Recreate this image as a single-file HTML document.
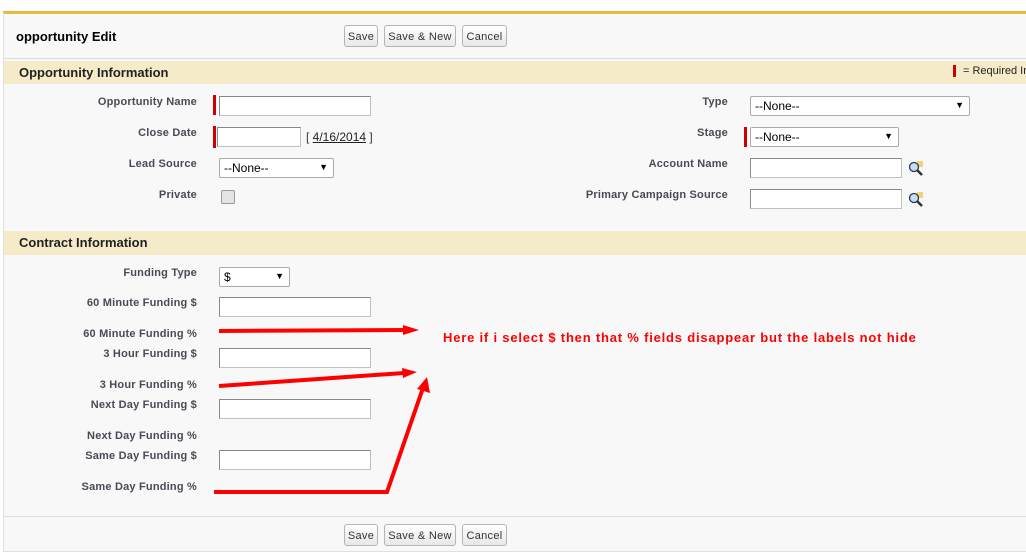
<!DOCTYPE html>
<html><head><style>
body{margin:0;width:1026px;height:555px;background:#fff;font-family:"Liberation Sans",Arial,sans-serif;position:relative;overflow:hidden}
.a{position:absolute}
.panel{left:3px;top:11px;width:1030px;height:541px;background:#f8f8f8;border-top:3px solid #e3bc3a;border-left:1px solid #e0e0e0;border-bottom:1px solid #e0e0e0;box-sizing:border-box}
.lbl{font-size:11px;font-weight:bold;color:#4a4a56;text-align:right;width:190px;white-space:nowrap;letter-spacing:0.2px}
.rl{width:220px}
.inp{background:#fff;border:1px solid #c0c0c0;border-top-color:#888;border-left-color:#888;height:19px;box-sizing:border-box}
.sel{background:#fff;border:1px solid #aaa;border-radius:2px;height:20px;box-sizing:border-box;font-size:12px;color:#000;padding:2px 0 0 4px}
.sel:after{content:"▼";position:absolute;right:5px;top:3px;font-size:9px}
.req{width:3px;background:#c00;height:20px}
.btn{top:0;height:22px;border:1px solid #b5b5b5;border-radius:3px;background:linear-gradient(#fff,#e8e8e8);font-size:11px;color:#333;box-sizing:border-box;text-align:center;line-height:22px;letter-spacing:0.3px}
.sec{left:4px;width:1022px;height:23px;background:#f6ebc8;font-size:13px;font-weight:bold;color:#222;padding-left:15px;line-height:23px;box-sizing:border-box}
.mag{width:16px;height:16px}
</style></head><body>
<div class="a panel"></div>
<div class="a" style="left:16px;top:29px;font-size:13px;font-weight:bold;color:#000">opportunity Edit</div>
<div class="a" style="left:0;top:25px;width:1026px;height:22px">
<div class="a btn" style="left:344px;width:34px">Save</div>
<div class="a btn" style="left:384px;width:72px">Save &amp; New</div>
<div class="a btn" style="left:462px;width:45px">Cancel</div>
</div>
<div class="a" style="left:4px;top:58px;width:1022px;height:1px;background:#dcdcdc"></div>
<div class="a sec" style="top:61px">Opportunity Information</div>
<div class="a req" style="left:953px;top:65px;height:12px"></div>
<div class="a" style="left:963px;top:65px;font-size:11px;color:#222;white-space:nowrap">= Required In</div>

<div class="a lbl" style="left:7px;top:96px">Opportunity Name</div>
<div class="a req" style="left:213px;top:95px"></div>
<div class="a inp" style="left:219px;top:96px;width:152px;height:20px"></div>
<div class="a lbl" style="left:7px;top:127px">Close Date</div>
<div class="a req" style="left:213px;top:126px;height:22px"></div>
<div class="a inp" style="left:217px;top:127px;width:84px;height:20px"></div>
<div class="a" style="left:306px;top:130px;font-size:12px;color:#333">[ <span style="text-decoration:underline;color:#222">4/16/2014</span> ]</div>
<div class="a lbl" style="left:7px;top:158px">Lead Source</div>
<div class="a sel" style="left:219px;top:158px;width:115px">--None--</div>
<div class="a lbl" style="left:7px;top:189px">Private</div>
<div class="a" style="left:221px;top:190px;width:12px;height:12px;border:1px solid #999;border-radius:2px;background:#e4e4e4"></div>

<div class="a lbl rl" style="left:508px;top:96px">Type</div>
<div class="a sel" style="left:750px;top:96px;width:220px">--None--</div>
<div class="a lbl rl" style="left:508px;top:127px">Stage</div>
<div class="a req" style="left:744px;top:127px"></div>
<div class="a sel" style="left:750px;top:127px;width:149px">--None--</div>
<div class="a lbl rl" style="left:508px;top:158px">Account Name</div>
<div class="a inp" style="left:750px;top:158px;width:152px;height:20px"></div>
<svg class="a mag" style="left:908px;top:161px" viewBox="0 0 16 16"><rect x="9" y="0" width="6" height="6" fill="#f3d27a"/><circle cx="6" cy="6" r="4.5" fill="#bfe0f5" stroke="#335" stroke-width="1.3"/><path d="M9 9l5 5" stroke="#333" stroke-width="2.5"/></svg>
<div class="a lbl rl" style="left:508px;top:189px">Primary Campaign Source</div>
<div class="a inp" style="left:750px;top:189px;width:152px;height:20px"></div>
<svg class="a mag" style="left:908px;top:192px" viewBox="0 0 16 16"><rect x="9" y="0" width="6" height="6" fill="#f3d27a"/><circle cx="6" cy="6" r="4.5" fill="#bfe0f5" stroke="#335" stroke-width="1.3"/><path d="M9 9l5 5" stroke="#333" stroke-width="2.5"/></svg>

<div class="a sec" style="top:231px;height:24px">Contract Information</div>
<div class="a lbl" style="left:7px;top:267px">Funding Type</div>
<div class="a sel" style="left:219px;top:267px;width:71px">$</div>
<div class="a lbl" style="left:7px;top:297px">60 Minute Funding $</div>
<div class="a inp" style="left:219px;top:297px;width:152px;height:20px"></div>
<div class="a lbl" style="left:7px;top:328px">60 Minute Funding %</div>
<div class="a lbl" style="left:7px;top:348px">3 Hour Funding $</div>
<div class="a inp" style="left:219px;top:348px;width:152px;height:20px"></div>
<div class="a lbl" style="left:7px;top:379px">3 Hour Funding %</div>
<div class="a lbl" style="left:7px;top:399px">Next Day Funding $</div>
<div class="a inp" style="left:219px;top:399px;width:152px;height:20px"></div>
<div class="a lbl" style="left:7px;top:430px">Next Day Funding %</div>
<div class="a lbl" style="left:7px;top:450px">Same Day Funding $</div>
<div class="a inp" style="left:219px;top:450px;width:152px;height:20px"></div>
<div class="a lbl" style="left:7px;top:481px">Same Day Funding %</div>

<svg class="a" style="left:0;top:0" width="1026" height="555">
<g stroke="#f00" stroke-width="4" fill="none">
<path d="M219 331L405 330"/>
<path d="M219 386L404 373"/>
<path d="M214 492L387 492L424 385"/>
</g>
<g fill="#f00">
<path d="M403 325L419 330L403 335Z"/>
<path d="M402 368L417 372L403 378Z"/>
<path d="M417 389L427 377L430 393Z"/>
</g>
</svg>
<div class="a" style="left:443px;top:330px;font-size:13px;font-weight:bold;color:#f00;letter-spacing:0.8px;white-space:nowrap">Here if i select $ then that % fields disappear but the labels not hide</div>

<div class="a" style="left:4px;top:516px;width:1022px;height:1px;background:#dcdcdc"></div>
<div class="a" style="left:0;top:524px;width:1026px;height:22px">
<div class="a btn" style="left:344px;width:34px">Save</div>
<div class="a btn" style="left:384px;width:72px">Save &amp; New</div>
<div class="a btn" style="left:462px;width:45px">Cancel</div>
</div>
</body></html>
